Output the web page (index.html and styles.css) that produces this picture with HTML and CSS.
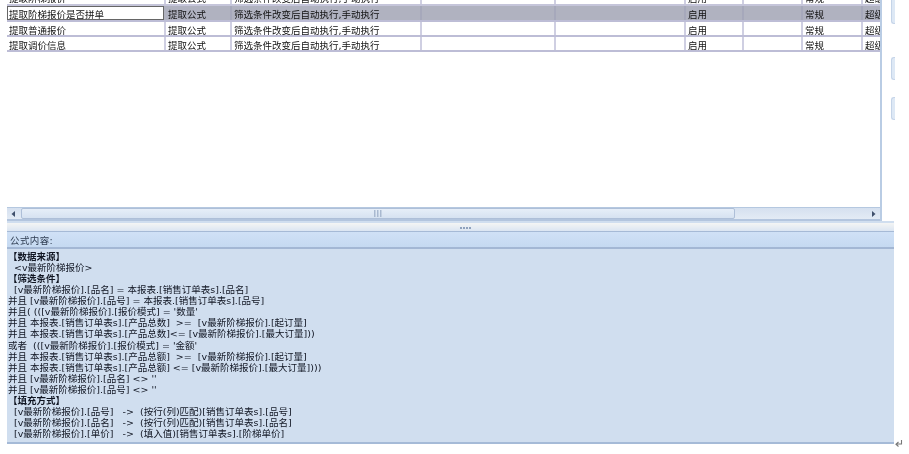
FILE: index.html
```html
<!DOCTYPE html>
<html lang="zh-CN">
<head>
<meta charset="utf-8">
<title>公式内容</title>
<link rel="stylesheet" href="styles.css">
</head>
<body>
<div class="page">
  <div class="upper">
    <div class="table-pane">
      <div class="grid">
        <div class="row row-clipped">
          <div class="cell">提取阶梯报价</div><div class="cell">提取公式</div><div class="cell">筛选条件改变后自动执行,手动执行</div><div class="cell"></div><div class="cell"></div><div class="cell">启用</div><div class="cell"></div><div class="cell">常规</div><div class="cell">超级</div>
        </div>
        <div class="row row-selected">
          <div class="cell cell-focus">提取阶梯报价是否拼单</div><div class="cell">提取公式</div><div class="cell">筛选条件改变后自动执行,手动执行</div><div class="cell"></div><div class="cell"></div><div class="cell">启用</div><div class="cell"></div><div class="cell">常规</div><div class="cell">超级</div>
        </div>
        <div class="row">
          <div class="cell">提取普通报价</div><div class="cell">提取公式</div><div class="cell">筛选条件改变后自动执行,手动执行</div><div class="cell"></div><div class="cell"></div><div class="cell">启用</div><div class="cell"></div><div class="cell">常规</div><div class="cell">超级</div>
        </div>
        <div class="row">
          <div class="cell">提取调价信息</div><div class="cell">提取公式</div><div class="cell">筛选条件改变后自动执行,手动执行</div><div class="cell"></div><div class="cell"></div><div class="cell">启用</div><div class="cell"></div><div class="cell">常规</div><div class="cell">超级</div>
        </div>
      </div>
      <div class="scrollbar">
        <svg class="arrow" width="14" height="14" viewBox="0 0 14 14"><path d="M8 4v6L4.500 7z" fill="#3f4f6b"/></svg>
        <div class="thumb">
          <svg width="8" height="7" viewBox="0 0 8 7"><path d="M0 0h1.500v7H0zM3 0h1.500v7H3zM6 0h1.500v7H6z" fill="#a9b9d0"/></svg>
        </div>
        <div class="track"></div>
        <svg class="arrow" width="14" height="14" viewBox="0 0 14 14"><path d="M6 4v6l3.500-3z" fill="#3f4f6b"/></svg>
      </div>
    </div>
    <div class="side-tabs">
      <div class="side-tab side-tab-first"></div>
      <div class="side-tab"></div>
      <div class="side-tab"></div>
    </div>
  </div>
  <div class="lower">
    <div class="panel">
      <div class="splitter"><span class="dot"></span><span class="dot"></span><span class="dot"></span><span class="dot"></span></div>
      <div class="panel-head">公式内容:</div>
      <div class="formula"><b class="section">【数据来源】</b>
  &lt;v最新阶梯报价&gt;
<b class="section">【筛选条件】</b>
  [v最新阶梯报价].[品名] = 本报表.[销售订单表s].[品名]
并且 [v最新阶梯报价].[品号] = 本报表.[销售订单表s].[品号]
并且( (([v最新阶梯报价].[报价模式] = '数量'
并且 本报表.[销售订单表s].[产品总数]  &gt;=  [v最新阶梯报价].[起订量]
并且 本报表.[销售订单表s].[产品总数]&lt;= [v最新阶梯报价].[最大订量]))
或者  (([v最新阶梯报价].[报价模式] = '金额'
并且 本报表.[销售订单表s].[产品总额]  &gt;=  [v最新阶梯报价].[起订量]
并且 本报表.[销售订单表s].[产品总额] &lt;= [v最新阶梯报价].[最大订量])))
并且 [v最新阶梯报价].[品名] &lt;&gt; ''
并且 [v最新阶梯报价].[品号] &lt;&gt; ''
<b class="section">【填充方式】</b>
  [v最新阶梯报价].[品号]   -&gt;  (按行(列)匹配)[销售订单表s].[品号]
  [v最新阶梯报价].[品名]   -&gt;  (按行(列)匹配)[销售订单表s].[品名]
  [v最新阶梯报价].[单价]   -&gt;  (填入值)[销售订单表s].[阶梯单价]</div>
    </div>
    <svg class="return-mark" width="8" height="8" viewBox="0 0 8 8"><path d="M6.500 0v4H1.500M3.500 2L1 4.200l2.500 2.300" fill="none" stroke="#777" stroke-width="1.100"/></svg>
  </div>
</div>
</body>
</html>
```
FILE: styles.css
```css
* { box-sizing: border-box; }
html, body { margin: 0; padding: 0; background: #fff; }
body { font-family: "DejaVu Sans", "Noto Sans CJK SC", sans-serif; font-size: 9.500px; color: #111; }

.page { width: 909px; height: 454px; overflow: hidden; padding-left: 7px; display: flex; flex-direction: column; }

.upper { display: flex; height: 221px; }
.table-pane { width: 875px; height: 221px; border-right: 2px solid #b9cce4; display: flex; flex-direction: column; }
.grid { flex: 1; overflow: hidden; }

.row { display: grid; grid-template-columns: 159px 66px 190px 134px 130px 58px 59px 60px 20px; height: 15px; border-bottom: 2px solid #bdbdd6; overflow: hidden; }
.row-clipped { height: 6px; border-bottom-color: #c5c5da; }
.row-clipped .cell { height: 17px; margin-top: -10px; }
.row-selected { background: #b0b2c0; height: 16px; }
.cell { border-right: 2px solid #cfcfe2; padding-left: 2px; line-height: 17px; white-space: nowrap; overflow: hidden; filter: blur(.3px); }
.cell:last-child { border-right: 0; }
.row-selected .cell { border-right-color: #a6a8bb; line-height: 18px; }
.row-selected .cell-focus { background: #fff; border: 1px solid #666; margin-right: 2px; line-height: 16px; padding-left: 1px; }

.scrollbar { height: 14px; flex: none; display: flex; align-items: center; background: linear-gradient(#d5e0ef, #e3ebf5); border-top: 1px solid #b5c8e0; border-bottom: 2px solid #b3c5de; }
.arrow { flex: none; }
.thumb { width: 714px; height: 100%; display: flex; align-items: center; justify-content: center; background: linear-gradient(#e6eef8, #d6e2f1); border: 1px solid #aebfd8; border-radius: 2px; }
.track { flex: 1; }

.side-tabs { margin-left: 9px; display: flex; flex-direction: column; gap: 17px; }
.side-tab { width: 4px; height: 23px; background: #dde8f5; border: 1px solid #c5d4e8; border-right: 0; border-radius: 3px 0 0 3px; }
.side-tab-first { height: 24px; margin-bottom: 16px; border-top: 0; border-radius: 0 0 0 3px; }

.lower { display: flex; align-items: flex-end; }
.panel { width: 887px; height: 223px; display: flex; flex-direction: column; border-bottom: 2px solid #a5bad7; background: #d0deef; }
.splitter { height: 8px; flex: none; margin-top: 2px; display: flex; justify-content: center; align-items: flex-end; gap: 1px; padding: 0 0 2px 30px; background: linear-gradient(#f4f5f4, #dbe5f2); }
.dot { width: 2px; height: 2px; background: #8fa2bd; }
.panel-head { height: 18px; flex: none; padding-left: 3px; line-height: 17px; color: #2f3d52; letter-spacing: .4px; border-top: 1px solid #a6bad6; border-bottom: 2px solid #a3b7d4; background: linear-gradient(#d0e1f6, #c5d9f1); filter: blur(.3px); }
.formula { flex: 1; padding: 2px 0 0 1px; line-height: 11.060px; white-space: pre; color: #101522; filter: blur(.3px); }
.section { font-weight: 700; }
.return-mark { flex: none; margin: 0 0 -4px 1px; }
```
